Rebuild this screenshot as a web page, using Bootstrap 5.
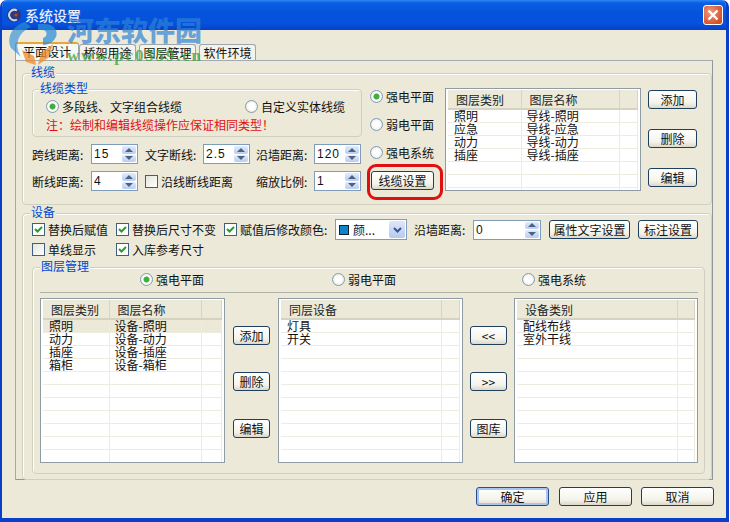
<!DOCTYPE html>
<html lang="zh">
<head>
    <meta charset="UTF-8">
    <meta name="viewport" content="width=device-width, initial-scale=1.0">
    <title>系统设置</title>
    <link href="https://cdn.jsdelivr.net/npm/bootstrap@5.3.0/dist/css/bootstrap.min.css" rel="stylesheet">
    <style>
        html, body { margin: 0; background: #fff; }
        body { font: 12px/13px "Noto Sans CJK SC", "Liberation Sans", sans-serif; color: #111; overflow: hidden; }
        .xp-win { position: relative; width: 729px; height: 522px; background: #ece9d8; border: solid #0a3fc8; border-width: 0 3px 4px 2px; border-radius: 7px 7px 0 0; overflow: hidden; }
        .xp-title { height: 30px; margin: 0 -3px 0 -2px; padding: 0 6px 0 6px; background: linear-gradient(#2f86f2 0, #0a5fe4 3px, #0453da 14px, #0552de 24px, #0a3fc0 30px); color: #e8eefc; font-size: 14px; font-weight: 500; }
        .xp-close { width: 20px; height: 20px; border: 1px solid #fff; border-radius: 3px; background: radial-gradient(circle at 35% 35%, #ee9a7c, #d8502a 75%); }
        .xp-body { padding: 14px 0 0 13px; }
        .xp-tabs { height: 16px; border: 0; padding-left: 0; }
        .xp-tab { height: 16px; padding-top: 1px; margin-right: 3px; width: 57px; text-align: center; background: #f4f3ea; border: 1px solid #9aa7b0; border-bottom: 0; border-radius: 3px 3px 0 0; }
        .xp-tab.on { width: 64px; height: 18px; margin-right: 0; margin-top: -2px; background: #f8f7f0; border-top: 2px solid #e8a53a; }
        .xp-panel { width: 698px; height: 420px; padding: 12px 0 0 6px; border: 1px solid #9aa7b0; border-color: #a3abb0 #8f979c #8f979c #a3abb0; background: #ece9d8; }
        .xp-grp { border: 1px solid #d0d0bf; border-radius: 4px; box-shadow: inset 1px 1px 0 #fff; }
        .xp-cap { width: fit-content; margin-top: -9px; margin-left: -2px; padding: 0 1px; background: #ece9d8; color: #0046d5; line-height: 13px; }
        .g-cable { width: 690px; height: 132px; padding-left: 9px; }
        .g-type { width: 330px; height: 48px; margin-top: 11px; padding-left: 13px; }
        .g-type .xp-cap { margin-left: -7px; margin-bottom: 6px; }
        .xp-note { color: #e01010; margin-top: 5px; }
        .xp-opt { display: flex; align-items: center; gap: 3px; white-space: nowrap; }
        .xp-radio, .xp-check { appearance: none; margin: 0; flex: none; width: 13px; height: 13px; background: #fff; }
        .xp-radio { border: 1px solid #7f9db9; border-radius: 50%; background: radial-gradient(circle, #fff 40%, #dcd8c8 100%); }
        .xp-radio:checked { background: radial-gradient(circle, #3fae3f 0 2.5px, #fff 3.5px, #e6e3d6 100%); }
        .xp-check { border: 1px solid #3f5f80; background: linear-gradient(135deg, #e5e4da, #fff); }
        .xp-check:checked { background: #fff url("data:image/svg+xml,%3Csvg xmlns='http://www.w3.org/2000/svg' width='11' height='11'%3E%3Cpath d='M2 5l2.5 2.5L9 3' fill='none' stroke='%2321a121' stroke-width='2'/%3E%3C/svg%3E") center no-repeat; }
        .xp-spin { display: flex; height: 20px; border: 1px solid #7f9db9; background: #fff; }
        .xp-spin input { width: 100%; min-width: 0; border: 0; outline: 0; padding: 0 2px; background: transparent; font: 12px "Liberation Sans", sans-serif; letter-spacing: 1px; color: #111; }
        .xp-arrows { flex: none; width: 16px; display: flex; flex-direction: column; gap: 1px; padding: 1px; }
        .xp-arrows span { flex: 1; background: linear-gradient(#e2ebfb, #b8cdf2); border-radius: 2px; display: flex; align-items: center; justify-content: center; }
        .xp-btn { display: block; width: 37px; height: 19px; padding: 0; border: 1px solid #1f3f5f; border-radius: 3px; background: linear-gradient(#fff, #f4f3ea 70%, #dcd8c8); color: #111; font-size: 12px; line-height: 16px; white-space: nowrap; }
        .xp-btn.wide { width: 49px; }
        .xp-btn.dlg { width: 73px; }
        .xp-btn.dflt { border-color: #2a4f8f; box-shadow: inset 0 0 0 2px #a9c4ee; }
        .xp-list { border: 1px solid #8f9ca3; background: #fff; padding: 1px 2px 0; overflow: hidden; }
        .xp-list table { width: 100%; table-layout: fixed; margin: 0; border-collapse: collapse; }
        .xp-list th { height: 19px; padding: 1px 0 0 8px; vertical-align: middle; background: #ece9d8; border: 0; border-right: 1px solid #d8d5c4; border-bottom: 2px solid #d6d2c0; font-weight: 400; }
        .xp-list td { height: 13px; padding: 0 0 0 6px; line-height: 12px; vertical-align: middle; border: 0; border-right: 1px solid #eeecdf; border-bottom: 1px solid #eeecdf; white-space: nowrap; color: #111; }
        .xp-list tr.sel td { background: #ece9d8; }
        .g-dev { width: 690px; height: 267px; margin-top: 8px; padding-left: 9px; }
        .g-layer { width: 673px; height: 207px; margin-top: 11px; }
        .g-layer .xp-cap { margin-left: 7px; }
        .xp-sep { height: 1px; margin: 6px 6px 5px 7px; background: #aeb1a8; }
        .xp-combo { width: 72px; height: 21px; border: 1px solid #7f9db9; background: #fff; padding-left: 3px; }
        .xp-swatch { width: 10px; height: 10px; background: #0c86c8; border: 1px solid #123; }
        .xp-drop { width: 16px; height: 17px; margin: 1px; background: linear-gradient(#dfe8fa, #b4c9f1); border-radius: 2px; }
        .xp-ring { position: absolute; left: 365px; top: 164px; width: 76px; height: 36px; border: 3px solid #e01010; border-radius: 9px; pointer-events: none; }
        .xp-mark { position: absolute; left: 5px; top: 18px; pointer-events: none; }
        .xp-mark-cn { position: absolute; left: 60px; top: -3px; font: 900 27px/30px "Noto Sans CJK SC", sans-serif; color: rgba(45,130,215,.7); white-space: nowrap; }
        .xp-mark-en { position: absolute; left: 60px; top: 30px; font: 700 17px/16px "Liberation Serif", serif; color: rgba(60,160,60,.75); white-space: nowrap; letter-spacing: 1.8px; }
    </style>
</head>
<body>
    <div class="xp-win">
        <div class="xp-title d-flex align-items-center">
            <svg width="16" height="16" viewBox="0 0 16 16" class="flex-shrink-0"><circle cx="8" cy="8" r="7" fill="#2b3a78"/><path d="M11 3.5a5.2 5.2 0 1 0 0 9" fill="none" stroke="#cfd3ea" stroke-width="2"/><circle cx="10" cy="8" r="1.6" fill="#c8402a"/></svg>
            <span style="margin-left:3px">系统设置</span>
            <span class="xp-close ms-auto d-flex align-items-center justify-content-center">
                <svg width="12" height="12" viewBox="0 0 12 12"><path d="M1.5 1.5l9 9M10.5 1.5l-9 9" stroke="#fff" stroke-width="2.4"/></svg>
            </span>
        </div>

        <div class="xp-body">
            <div class="xp-tabs d-flex align-items-end">
                <div class="xp-tab on">平面设计</div>
                <div class="xp-tab">桥架用途</div>
                <div class="xp-tab">图层管理</div>
                <div class="xp-tab">软件环境</div>
            </div>
            <div class="xp-panel">
                <div class="xp-grp g-cable">
                    <div class="xp-cap">线缆</div>
                    <div class="d-flex">
                        <div style="width:338px">
                            <div class="xp-grp g-type">
                                <div class="xp-cap">线缆类型</div>
                                <div class="d-flex">
                                    <label class="xp-opt" style="width:199px"><input class="xp-radio" type="radio" name="t" checked>多段线、文字组合线缆</label>
                                    <label class="xp-opt"><input class="xp-radio" type="radio" name="t">自定义实体线缆</label>
                                </div>
                                <div class="xp-note">注：绘制和编辑线缆操作应保证相同类型！</div>
                            </div>
                            <div class="d-flex align-items-center" style="margin-top:7px">
                                <span style="width:59px">跨线距离:</span>
                                <div class="xp-spin" style="width:47px"><input value="15"><div class="xp-arrows"><span><svg width="8" height="4"><path d="M0 4l4-4 4 4z" fill="#4d6185"/></svg></span><span><svg width="8" height="4"><path d="M0 0l4 4 4-4z" fill="#4d6185"/></svg></span></div></div>
                                <span style="width:58px;margin-left:7px">文字断线:</span>
                                <div class="xp-spin" style="width:47px"><input value="2.5"><div class="xp-arrows"><span><svg width="8" height="4"><path d="M0 4l4-4 4 4z" fill="#4d6185"/></svg></span><span><svg width="8" height="4"><path d="M0 0l4 4 4-4z" fill="#4d6185"/></svg></span></div></div>
                                <span style="width:58px;margin-left:6px">沿墙距离:</span>
                                <div class="xp-spin" style="width:47px"><input value="120"><div class="xp-arrows"><span><svg width="8" height="4"><path d="M0 4l4-4 4 4z" fill="#4d6185"/></svg></span><span><svg width="8" height="4"><path d="M0 0l4 4 4-4z" fill="#4d6185"/></svg></span></div></div>
                            </div>
                            <div class="d-flex align-items-center" style="margin-top:7px">
                                <span style="width:59px">断线距离:</span>
                                <div class="xp-spin" style="width:47px"><input value="4"><div class="xp-arrows"><span><svg width="8" height="4"><path d="M0 4l4-4 4 4z" fill="#4d6185"/></svg></span><span><svg width="8" height="4"><path d="M0 0l4 4 4-4z" fill="#4d6185"/></svg></span></div></div>
                                <label class="xp-opt" style="width:111px;margin-left:7px"><input class="xp-check" type="checkbox">沿线断线距离</label>
                                <span style="width:58px">缩放比例:</span>
                                <div class="xp-spin" style="width:47px"><input value="1"><div class="xp-arrows"><span><svg width="8" height="4"><path d="M0 4l4-4 4 4z" fill="#4d6185"/></svg></span><span><svg width="8" height="4"><path d="M0 0l4 4 4-4z" fill="#4d6185"/></svg></span></div></div>
                            </div>
                        </div>
                        <div style="width:75px;padding-top:12px">
                            <label class="xp-opt"><input class="xp-radio" type="radio" name="p" checked>强电平面</label>
                            <label class="xp-opt" style="margin-top:15px"><input class="xp-radio" type="radio" name="p">弱电平面</label>
                            <label class="xp-opt" style="margin-top:15px"><input class="xp-radio" type="radio" name="p">强电系统</label>
                            <button class="xp-btn" style="width:63px;margin:12px 0 0 1px">线缆设置</button>
                        </div>
                        <div class="xp-list" style="width:196px;height:103px;margin-top:10px">
                            <table class="table">
                                <colgroup><col style="width:73px"><col style="width:98px"><col></colgroup>
                                <thead><tr><th>图层类别</th><th>图层名称</th><th></th></tr></thead>
                                <tbody>
                                    <tr><td>照明</td><td style="padding-left:5px">导线-照明</td><td></td></tr>
                                    <tr><td>应急</td><td style="padding-left:5px">导线-应急</td><td></td></tr>
                                    <tr><td>动力</td><td style="padding-left:5px">导线-动力</td><td></td></tr>
                                    <tr><td>插座</td><td style="padding-left:5px">导线-插座</td><td></td></tr>
                                    <tr><td></td><td></td><td></td></tr>
                                    <tr><td></td><td></td><td></td></tr>
                                    <tr><td></td><td></td><td></td></tr>
                                </tbody>
                            </table>
                        </div>
                        <div class="d-flex flex-column" style="margin:12px 0 0 7px;gap:20px">
                            <button class="xp-btn wide">添加</button>
                            <button class="xp-btn wide">删除</button>
                            <button class="xp-btn wide">编辑</button>
                        </div>
                    </div>
                </div>

                <div class="xp-grp g-dev">
                    <div class="xp-cap">设备</div>
                    <div class="d-flex align-items-center" style="margin-top:1px">
                        <label class="xp-opt" style="width:84px"><input class="xp-check" type="checkbox" checked>替换后赋值</label>
                        <label class="xp-opt" style="width:108px"><input class="xp-check" type="checkbox" checked>替换后尺寸不变</label>
                        <label class="xp-opt" style="width:111px"><input class="xp-check" type="checkbox" checked>赋值后修改颜色:</label>
                        <div class="xp-combo d-flex align-items-center"><span class="xp-swatch me-1"></span>颜...<span class="xp-drop ms-auto d-flex align-items-center justify-content-center"><svg width="9" height="6"><path d="M1 1l3.5 3.5L8 1" fill="none" stroke="#3a558c" stroke-width="2"/></svg></span></div>
                        <span style="width:59px;margin-left:7px">沿墙距离:</span>
                        <div class="xp-spin" style="width:68px"><input value="0"><div class="xp-arrows"><span><svg width="8" height="4"><path d="M0 4l4-4 4 4z" fill="#4d6185"/></svg></span><span><svg width="8" height="4"><path d="M0 0l4 4 4-4z" fill="#4d6185"/></svg></span></div></div>
                        <button class="xp-btn" style="width:81px;margin-left:8px">属性文字设置</button>
                        <button class="xp-btn" style="width:60px;margin-left:8px">标注设置</button>
                    </div>
                    <div class="d-flex align-items-center" style="margin-top:3px">
                        <label class="xp-opt" style="width:84px"><input class="xp-check" type="checkbox">单线显示</label>
                        <label class="xp-opt"><input class="xp-check" type="checkbox" checked>入库参考尺寸</label>
                    </div>
                    <div class="xp-grp g-layer">
                        <div class="xp-cap">图层管理</div>
                        <div class="d-flex" style="margin-top:1px;padding-left:107px">
                            <label class="xp-opt" style="width:192px"><input class="xp-radio" type="radio" name="l" checked>强电平面</label>
                            <label class="xp-opt" style="width:190px"><input class="xp-radio" type="radio" name="l">弱电平面</label>
                            <label class="xp-opt"><input class="xp-radio" type="radio" name="l">强电系统</label>
                        </div>
                        <div class="xp-sep"></div>
                        <div class="d-flex" style="padding-left:7px">
                            <div class="xp-list" style="width:185px;height:165px">
                                <table class="table">
                                    <colgroup><col style="width:66px"><col style="width:92px"><col></colgroup>
                                    <thead><tr><th>图层类别</th><th>图层名称</th><th></th></tr></thead>
                                    <tbody>
                                        <tr class="sel"><td>照明</td><td style="padding-left:5px">设备-照明</td><td></td></tr>
                                        <tr><td>动力</td><td style="padding-left:5px">设备-动力</td><td></td></tr>
                                        <tr><td>插座</td><td style="padding-left:5px">设备-插座</td><td></td></tr>
                                        <tr><td>箱柜</td><td style="padding-left:5px">设备-箱柜</td><td></td></tr>
                                        <tr><td></td><td></td><td></td></tr><tr><td></td><td></td><td></td></tr><tr><td></td><td></td><td></td></tr><tr><td></td><td></td><td></td></tr><tr><td></td><td></td><td></td></tr><tr><td></td><td></td><td></td></tr><tr><td></td><td></td><td></td></tr><tr><td></td><td></td><td></td></tr>
                                    </tbody>
                                </table>
                            </div>
                            <div class="d-flex flex-column" style="margin:28px 8px 0;gap:27px">
                                <button class="xp-btn">添加</button>
                                <button class="xp-btn">删除</button>
                                <button class="xp-btn" style="margin-top:1px">编辑</button>
                            </div>
                            <div class="xp-list" style="width:185px;height:165px">
                                <table class="table">
                                    <colgroup><col style="width:160px"><col></colgroup>
                                    <thead><tr><th>同层设备</th><th></th></tr></thead>
                                    <tbody>
                                        <tr><td>灯具</td><td></td></tr>
                                        <tr><td>开关</td><td></td></tr>
                                        <tr><td></td><td></td></tr><tr><td></td><td></td></tr><tr><td></td><td></td></tr><tr><td></td><td></td></tr><tr><td></td><td></td></tr><tr><td></td><td></td></tr><tr><td></td><td></td></tr><tr><td></td><td></td></tr><tr><td></td><td></td></tr><tr><td></td><td></td></tr>
                                    </tbody>
                                </table>
                            </div>
                            <div class="d-flex flex-column" style="margin:28px 7px 0;gap:27px">
                                <button class="xp-btn">&lt;&lt;</button>
                                <button class="xp-btn">&gt;&gt;</button>
                                <button class="xp-btn" style="margin-top:1px">图库</button>
                            </div>
                            <div class="xp-list" style="width:184px;height:165px">
                                <table class="table">
                                    <colgroup><col style="width:160px"><col></colgroup>
                                    <thead><tr><th>设备类别</th><th></th></tr></thead>
                                    <tbody>
                                        <tr><td>配线布线</td><td></td></tr>
                                        <tr><td>室外干线</td><td></td></tr>
                                        <tr><td></td><td></td></tr><tr><td></td><td></td></tr><tr><td></td><td></td></tr><tr><td></td><td></td></tr><tr><td></td><td></td></tr><tr><td></td><td></td></tr><tr><td></td><td></td></tr><tr><td></td><td></td></tr><tr><td></td><td></td></tr><tr><td></td><td></td></tr>
                                    </tbody>
                                </table>
                            </div>
                        </div>
                    </div>
                </div>
            </div>
            <div class="d-flex justify-content-end" style="width:699px;margin-top:7px;gap:9px">
                <button class="xp-btn dlg dflt" style="margin-right:1px">确定</button>
                <button class="xp-btn dlg">应用</button>
                <button class="xp-btn dlg">取消</button>
            </div>
        </div>

        <div class="xp-ring"></div>
        <div class="xp-mark">
            <svg width="56" height="50" viewBox="0 0 56 50"><path d="M18 4C5 8 -1 20 4 30l10 9C7 28 10 15 24 9z" fill="#2f8fd8" opacity=".65"/><path d="M31 6h6c14 0 16 12 8 18-3 2-6 3-9 3v-7c5-1 5-8-1-8h-4z" fill="#2f8fd8" opacity=".75"/><path d="M15 32l12 6 2 9-10-3zM31 47l3-12 12-9-5 14z" fill="#ef8a2a" opacity=".75"/></svg>
            <div class="xp-mark-cn">河东软件园</div>
            <div class="xp-mark-en">www.pc0359.cn</div>
        </div>
    </div>

    <script src="https://cdn.jsdelivr.net/npm/bootstrap@5.3.0/dist/js/bootstrap.bundle.min.js"></script>
</body>
</html>
